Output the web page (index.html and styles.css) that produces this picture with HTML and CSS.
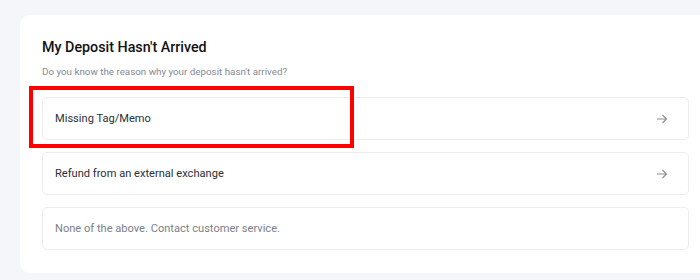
FILE: index.html
```html
<!DOCTYPE html>
<html lang="en">
<head>
    <meta charset="UTF-8">
    <meta name="viewport" content="width=device-width, initial-scale=1.0">
    <title>My Deposit Hasn't Arrived</title>
    <link rel="stylesheet" href="styles.css">
</head>
<body>
    <div class="card">
        <h1>My Deposit Hasn't Arrived</h1>
        <p class="subtitle">Do you know the reason why your deposit hasn't arrived?</p>
        <div class="options">
            <div class="option-wrap">
                <div class="option">
                    <span>Missing Tag/Memo</span>
                    <svg class="arrow" width="12" height="12" viewBox="0 0 12 12"><path d="M1 6h9.5M6.5 2l4 4-4 4" fill="none" stroke="#8a8d93" stroke-width="1.1"/></svg>
                </div>
                <div class="highlight"></div>
            </div>
            <div class="option">
                <span>Refund from an external exchange</span>
                <svg class="arrow" width="12" height="12" viewBox="0 0 12 12"><path d="M1 6h9.5M6.5 2l4 4-4 4" fill="none" stroke="#8a8d93" stroke-width="1.1"/></svg>
            </div>
            <div class="option muted">
                <span>None of the above. Contact customer service.</span>
            </div>
        </div>
    </div>
</body>
</html>
```

FILE: styles.css
```css
* {
    box-sizing: border-box;
    margin: 0;
    padding: 0;
}

body {
    background-color: #f5f6f9;
    font-family: 'Roboto', 'Noto Sans', sans-serif;
    color: #1e2329;
    padding: 15px 0 7px 20px;
}

.card {
    background-color: #fff;
    border-radius: 10px 0 0 10px;
    padding: 23px 11px 22px 22px;
    height: 258px;
}

h1 {
    font-size: 14.3px;
    font-weight: 500;
    line-height: 18px;
    color: #121214;
}

.subtitle {
    margin-top: 10px;
    font-size: 9.8px;
    line-height: 12px;
    color: #858a92;
}

.options {
    margin-top: 19px;
    display: flex;
    flex-direction: column;
    gap: 12px;
}

.option-wrap {
    position: relative;
}

.option {
    display: flex;
    align-items: center;
    justify-content: space-between;
    height: 43px;
    padding: 0 20px 0 12px;
    border: 1px solid #ececef;
    border-radius: 5px;
    font-size: 11.1px;
    color: #2b2f36;
}

.option.muted {
    color: #7c8088;
}

.highlight {
    position: absolute;
    left: -13px;
    top: -11px;
    width: 325px;
    height: 62px;
    border: 4px solid #f00;
}
```
